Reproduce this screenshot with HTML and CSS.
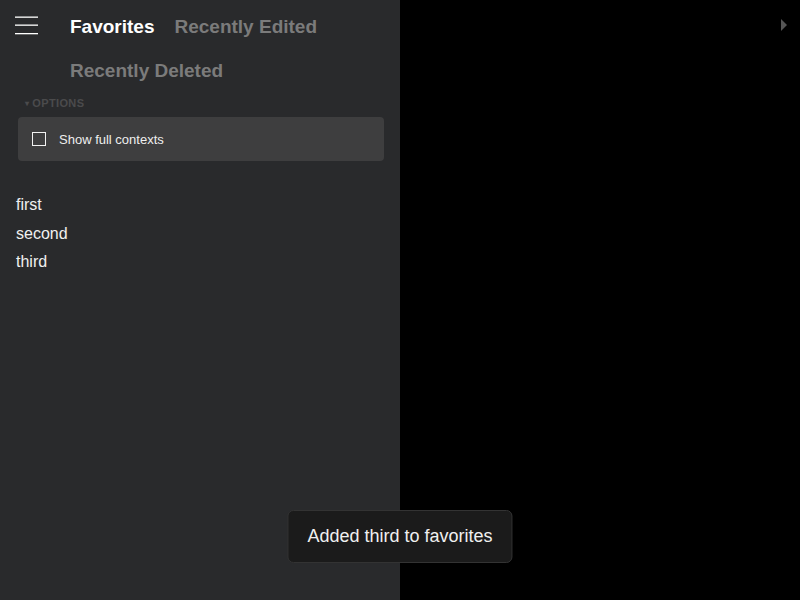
FILE: index.html
```html
<!DOCTYPE html>
<html>
<head>
<meta charset="utf-8">
<link rel="stylesheet" href="styles.css">
</head>
<body>
<div class="app">
  <aside class="sidebar">
    <header class="header">
      <button class="menu" aria-label="Menu">
        <svg width="24" height="20" viewBox="0 0 24 20">
          <rect x="0" y="1.5" width="23" height="1.3" fill="#fff"/>
          <rect x="0" y="9.5" width="23" height="1.3" fill="#fff"/>
          <rect x="0" y="18" width="23" height="1.3" fill="#fff"/>
        </svg>
      </button>
      <nav class="tabs">
        <a class="tab active">Favorites</a>
        <a class="tab">Recently Edited</a>
        <a class="tab">Recently Deleted</a>
      </nav>
    </header>
    <section class="options">
      <div class="options-label"><span class="caret">▾</span>OPTIONS</div>
      <div class="options-box">
        <label class="check"><span class="box"></span>Show full contexts</label>
      </div>
    </section>
    <ul class="list">
      <li>first</li>
      <li>second</li>
      <li>third</li>
    </ul>
  </aside>
  <main class="main">
    <span class="expand"></span>
  </main>
</div>
<div class="toast">Added third to favorites</div>
</body>
</html>
```
FILE: styles.css
```css
html, body {
  margin: 0;
  padding: 0;
  height: 100%;
  background: #000;
  font-family: "Liberation Sans", Arial, sans-serif;
}
.app {
  display: flex;
  height: 100%;
}
.sidebar {
  width: 400px;
  flex: none;
  background: #292a2c;
  color: #eee;
}
.header {
  display: flex;
  align-items: flex-start;
  padding: 15px 0 0 15px;
}
.menu {
  background: none;
  border: 0;
  padding: 0;
  width: 23px;
  height: 20px;
  display: block;
}
.menu svg { display: block; }
.tabs {
  margin-left: 32px;
  display: flex;
  flex-wrap: wrap;
  column-gap: 20px;
  row-gap: 20px;
}
.tab {
  font-size: 19px;
  font-weight: bold;
  line-height: 24px;
  color: #7b7b7b;
}
.tab.active { color: #fff; }
.options {
  margin-top: 14px;
}
.options-label {
  font-size: 11px;
  font-weight: bold;
  line-height: 13px;
  letter-spacing: 0.35px;
  color: #4b4b4c;
  padding-left: 25px;
}
.caret {
  font-size: 8px;
  margin-right: 3px;
  position: relative;
  top: -1px;
}
.options-box {
  margin: 6px 16px 0 18px;
  height: 44px;
  background: #3e3e3f;
  border-radius: 4px;
  display: flex;
  align-items: center;
  padding-left: 14px;
}
.check {
  display: flex;
  align-items: center;
  font-size: 13px;
  color: #eee;
}
.box {
  width: 12px;
  height: 12px;
  border: 1.5px solid #f2f2f2;
  margin-right: 13px;
}
.list {
  list-style: none;
  margin: 30px 0 0;
  padding: 0 0 0 16px;
}
.list li {
  font-size: 16px;
  line-height: 28.5px;
  color: #f0f0f0;
}
.main {
  flex: 1;
  display: flex;
  justify-content: flex-end;
  align-items: flex-start;
  padding: 19px 13px 0 0;
}
.expand {
  width: 0;
  height: 0;
  border-top: 6px solid transparent;
  border-bottom: 6px solid transparent;
  border-left: 6px solid #555;
}
.toast {
  position: fixed;
  left: 50%;
  bottom: 37px;
  transform: translateX(-50%);
  background: #1b1b1b;
  border: 1px solid #333;
  border-radius: 6px;
  padding: 15px 19px;
  font-size: 18px;
  line-height: 21px;
  color: #f0f0f0;
  white-space: nowrap;
}
```
